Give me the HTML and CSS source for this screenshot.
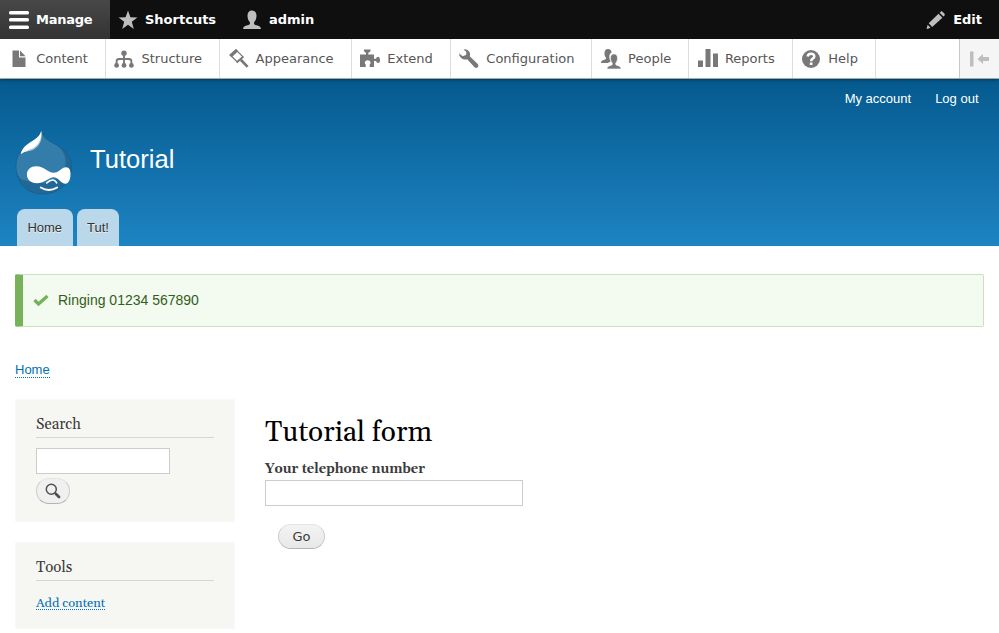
FILE: index.html
```html
<!DOCTYPE html>
<html lang="en">
<head>
<meta charset="utf-8">
<title>Tutorial form | Tutorial</title>
<link rel="stylesheet" href="styles.css">
</head>
<body>
<nav class="toolbar-bar">
  <a class="tab tab-active" href="#"><svg class="icon" viewBox="0 0 20 20"><g fill="#fff"><rect y="1" width="20" height="3.500" rx="1.500"/><rect y="8" width="20" height="3.500" rx="1.500"/><rect y="15.500" width="20" height="3.500" rx="1.500"/></g></svg>Manage</a>
  <a class="tab tab-shortcuts" href="#"><svg class="icon" viewBox="0 0 20 20"><path fill="#bebebe" d="M10 .5l2.400 6.800 7 .2-5.600 4.300 2 7.200-5.800-4.200L4.200 19l2-7.200L.6 7.500l7-.2z"/></svg>Shortcuts</a>
  <a class="tab tab-user" href="#"><svg class="icon" viewBox="0 0 20 20"><path fill="#bebebe" d="M10 .5c3 0 4.500 2 4.500 5.300 0 2.800-1 5-2.300 6.300-.5 1.800.1 2.500 2.300 3.200 2.700.7 4.300 1.200 4.500 3.700H1c.2-2.500 1.800-3 4.500-3.700 2.200-.7 2.800-1.400 2.300-3.200C6.500 10.800 5.500 8.600 5.500 5.800 5.500 2.500 7 .5 10 .5z"/></svg>admin</a>
  <a class="tab tab-edit" href="#"><svg class="icon" viewBox="0 0 20 20"><path fill="#bebebe" d="M12.500 3.800l3.900 3.900L6.200 17.100l-3.500-3.900zM13.600 2.700l1.200-1c.6-.5 1.200-.4 1.700.1l2 2c.5.600.5 1.200 0 1.700l-1.100 1.100zM1.700 14.800l2.800 3-3.200 1.200-.7-.8z"/></svg>Edit</a>
</nav>
<nav class="tray">
  <a class="item" href="#"><svg class="icon" viewBox="0 0 20 20"><path fill="#787878" d="M3.500 1.500H10v7h6.500V18h-13zM11 1.500l5.500 5.800H11z"/></svg>Content</a>
  <a class="item" href="#"><svg class="icon" viewBox="0 0 20 20"><g fill="#787878"><circle cx="10" cy="4.200" r="2.700"/><circle cx="2.600" cy="16.400" r="2.400"/><circle cx="10" cy="16.400" r="2.400"/><circle cx="17.400" cy="16.400" r="2.400"/></g><path fill="none" stroke="#787878" stroke-width="1.900" d="M10 5v11M2.600 16v-3.500q0-2.500 2.500-2.500h9.800q2.500 0 2.500 2.500V16"/></svg>Structure</a>
  <a class="item" href="#"><svg class="icon" viewBox="0 0 20 20"><path fill="none" stroke="#787878" stroke-width="1.300" d="M1.200 6L7 .9l7 7-5.800 5z"/><path fill="#787878" d="M.3 6L7 0l2.200 2.200-6.500 6zM13.600 6.900l1.200 1.400-6.500 5.900-1.300-1.500z"/><path stroke="#787878" stroke-width="2.700" d="M11.800 10.700l6.800 7.200"/></svg>Appearance</a>
  <a class="item" href="#"><svg class="icon" viewBox="0 0 20 20"><path fill="#787878" d="M0 5.500h6V3.700Q3.500 3.100 4 .5h6.500q.5 2.600-2.200 3.200v1.800H14v4.200h2q.5-2 2.300-2Q20 8 20 11t-1.700 3q-1.800 0-2.300-2h-2v6H9.700v-2.500q1.100-.8.800-2.200-.4-2-2.800-2T4.800 13.300q-.3 1.400.9 2.200V18H0z"/></svg>Extend</a>
  <a class="item" href="#"><svg class="icon" viewBox="0 0 20 20"><path fill="#787878" d="M4.500.4Q8.600-.5 10.500 3q1 2.300.2 4.200l8 7.800q1.400 1.700 0 3.200-1.600 1.400-3.200 0L8.200 10.200Q5 11.300 2.200 9 0 7 0 4.300l3.600 2.900 3.500-1.300.3-3z"/></svg>Configuration</a>
  <a class="item" href="#"><svg class="icon" viewBox="0 0 20 20"><path fill="#787878" d="M7 0c2.200 0 3.500 1.200 3.500 3.500-2 1.300-2.500 3.200-2 6 .3 1.600.8 2.300 1.200 3-.9.7-2 1-2.900 1.500H0c.1-2.500 1.200-2.400 3.500-3.200 1.500-.6 2-1.300 1.200-2.500C3.800 7.300 3.400 5.700 3.500 4 3.600 1.300 4.800 0 7 0z"/><path fill="#787878" stroke="#fff" stroke-width=".6" d="M13 4.900c2.300 0 3.600 1.500 3.500 4.300 0 2-.7 3.500-1.600 4.700-.7 1.400-.2 2 1.600 2.600 2.300.7 3.400 1.200 3.500 3.500H6c.1-2.300 1.200-2.800 3.500-3.500 1.800-.6 2.300-1.200 1.600-2.600-.9-1.200-1.600-2.700-1.600-4.700C9.400 6.400 10.700 4.900 13 4.900z"/></svg>People</a>
  <a class="item" href="#"><svg class="icon" viewBox="0 0 20 20"><path fill="#787878" d="M0 11.500h5V18H0zM7.500 0h5v18h-5zM15 4.500h5V18h-5z"/></svg>Reports</a>
  <a class="item" href="#"><svg class="icon" viewBox="0 0 20 20"><circle cx="10" cy="10" r="9" fill="#787878"/><path fill="none" stroke="#fff" stroke-width="2.500" d="M6.600 7.500Q7 4.700 10 4.700t3.300 2.600q0 1.500-1.600 2.400-1.500.8-1.500 2.500"/><path fill="#fff" d="M8.800 13.500h2.700V16H8.800z"/></svg>Help</a>
  <a class="toggle" href="#" aria-label="Vertical orientation"><svg class="icon" viewBox="0 0 20 20"><path fill="#bebebe" d="M1 2.500h3.500v15H1zM8.500 10l5.500-5v3h6v4h-6v3z"/></svg></a>
</nav>
<header class="header">
  <div class="account"><a href="#">My account</a><a href="#">Log out</a></div>
  <div class="branding">
    <svg class="logo" viewBox="0 0 58 66" preserveAspectRatio="none">
      <path fill="#226796" d="M27 1c1 6 5 9 13 13 10 5 17 12 17 23 0 15-12 27-29 27S1 52 1 36C1 24 8 18 18 12c6-4 8-7 9-11z"/>
      <path fill="#347dab" d="M27 1c1 6 5 9 13 13 7 4 11 10 11 18 0 14-12 21-26 21-7 0-13-2-19-4C2 45 1 41 1 36 1 24 8 18 18 12c6-4 8-7 9-11z"/>
      <path fill="none" stroke="#155a87" stroke-width="1" opacity=".6" d="M27 1c1 6 5 9 13 13 10 5 17 12 17 23 0 15-12 27-29 27S1 52 1 36C1 24 8 18 18 12c6-4 8-7 9-11z"/>
      <path fill="#accbdc" d="M26.500 1c1.500 8-1 15-8.500 19-5 2-9 1-12 4 0-5 8-10 13-13 4-3 6.500-6 7.500-10z"/>
      <path fill="#fff" d="M26.500 1c.5 7-2 13-8 17-4 2-8 3-12.500 6C7 17 14 13 19 10c4-3 6.500-5 7.500-9z"/>
      <path fill="#fff" d="M12 44.500c0-5 4-8.300 9.500-8.300 7.500 0 12 6.500 17.500 6.500 5.500 0 8-5.500 12.500-5.500 3.500 0 4.500 3 4.500 7 0 5-2 9.500-5 9.500-4.500 0-7.500-6.500-12-6.500-5 0-9 6-17 6-6 0-10-3.700-10-8.700z"/>
      <path fill="none" stroke="#fff" stroke-width="1.700" stroke-linecap="round" d="M32 53c2-2 4-3 6-3 2.500 0 3 1 4 2.800"/>
      <path fill="none" stroke="#fff" stroke-width="2" stroke-linecap="round" d="M26 57.500q8 5 16.500 0"/>
    </svg>
    <span class="site-name">Tutorial</span>
  </div>
  <nav class="menu"><a href="#">Home</a><a href="#">Tut!</a></nav>
</header>
<div class="message"><svg class="check" viewBox="0 0 16 16"><path fill="none" stroke="#73b355" stroke-width="3.200" d="M1.500 8l4 4 9-8"/></svg>Ringing 01234 567890</div>
<div class="breadcrumb"><a class="link" href="#">Home</a></div>
<div class="columns">
  <aside class="sidebar">
    <section class="block search">
      <h2>Search</h2>
      <input class="field" type="text" aria-label="Search">
      <button class="button search-button" aria-label="Search"><svg viewBox="0 0 16 16"><circle cx="6.300" cy="6.300" r="5" fill="none" stroke="#505050" stroke-width="1.500"/><path stroke="#505050" stroke-width="2.800" stroke-linecap="round" d="M11 11l3 3"/><path stroke="#505050" stroke-width="1.700" d="M9.700 9.700l2 2"/></svg></button>
    </section>
    <section class="block tools">
      <h2>Tools</h2>
      <a class="link" href="#">Add content</a>
    </section>
  </aside>
  <main class="main">
    <h1>Tutorial form</h1>
    <label for="phone">Your telephone number</label>
    <input class="field" id="phone" type="text">
    <button class="button go">Go</button>
  </main>
</div>
</body>
</html>
```
FILE: styles.css
```css
* { box-sizing: border-box; }
body { margin: 0; background: #fff; color: #3b3b3b; font-family: Georgia, Gelasio, "Liberation Serif", serif; height: 633px; overflow: hidden; }
a { text-decoration: none; color: inherit; }
svg { display: block; flex: none; }
.icon { width: 20px; height: 20px; }
.toolbar-bar { display: flex; height: 39px; background: #0f0f0f; color: #fff; font: bold 13px "DejaVu Sans", sans-serif; }
.tab { display: flex; align-items: center; gap: 7px; padding: 0 9px; }
.tab-active { width: 110px; background: linear-gradient(#484848, #333); letter-spacing: -.25px; }
.tab-shortcuts { width: 123px; padding-left: 8px; }
.tab-edit { margin-left: auto; padding-right: 17px; }
.tray { display: flex; height: 40px; border-bottom: 1px solid #a5a9ab; background: #fff; color: #565656; font: 13px "DejaVu Sans", sans-serif; position: relative; box-shadow: 0 0 4px rgba(0, 0, 0, .6); clip-path: inset(0 0 -6px 0); }
.item { display: flex; align-items: center; gap: 7px; padding: 0 17px 0 8.600px; border-right: 1px solid #ddd; }
.item:first-child { padding-left: 9.200px; }
.toggle { display: flex; align-items: center; margin-left: auto; width: 40px; padding-left: 9px; border-left: 1px solid #c9c9c9; background: #f5f5f5; }
.header { display: flex; flex-direction: column; height: 167px; background: linear-gradient(#055a8e, #1d84c3); color: #fff; font-family: "Liberation Sans", sans-serif; }
.account { display: flex; justify-content: flex-end; gap: 24px; padding: 12px 20.500px 0; font-size: 13px; line-height: 16px; }
.branding { display: flex; padding: 23px 15px 0; }
.logo { width: 57.500px; height: 66px; }
.site-name { margin: 14px 0 0 17.500px; font-size: 25.600px; line-height: 30px; }
.menu { display: flex; gap: 4px; margin-top: auto; padding-left: 17px; font-size: 13px; color: #333; }
.menu a { height: 37px; padding: 0 10.500px 0 10.400px; line-height: 37px; border-radius: 8px 8px 0 0; background: #bbd8ea; text-shadow: 0 1px #eee; }
.message { display: flex; align-items: center; height: 53px; margin: 28px 15px 0; padding: 0 0 2px 10px; border: 1px solid #c9e1bd; border-left: 8px solid #77b259; border-radius: 2px; background: #f3faef; color: #325e1c; font: 14px "Liberation Sans", sans-serif; }
.check { width: 16px; height: 16px; margin-right: 9px; }
.link { color: #0071b3; border-bottom: 1px dotted #0071b3; }
.breadcrumb { height: 72px; padding: 35px 15px 0; font: 13px/16px "Liberation Sans", sans-serif; }
.columns { display: flex; gap: 30px; padding: 0 15px; }
.sidebar { display: flex; flex-direction: column; gap: 20px; width: 220px; }
.block { padding: 14px 20px 0; background: #f6f6f2; border: 1px solid #f9f9f9; }
.search { height: 123px; }
.tools { height: 87px; font-size: 12.800px; line-height: 14px; }
h2 { height: 24px; margin: 0 0 10px; border-bottom: 1px solid #d6d6d6; font-size: 15px; font-weight: normal; line-height: 21px; }
.tools h2 { margin-bottom: 15px; }
.tools .link { display: inline-block; height: 14px; }
.field { display: block; height: 26px; padding: 4px; border: 1px solid #ccc; background: #fff; }
.search .field { width: 134px; }
.button { display: block; border: 1px solid #ccc; border-top-color: #e4e4e4; border-bottom-color: #b4b4b4; border-radius: 16px; background: linear-gradient(#f3f3f3, #e8e8e8); color: #3a3a3a; }
.search-button { width: 34px; height: 26px; margin-top: 4px; padding: 0 8px 1px 8px; background: #f0f0f0; }
.search-button svg { width: 16px; height: 16px; }
.main { padding-top: 14px; }
h1 { margin: 0 0 8px; color: #000; font-size: 28px; font-weight: normal; line-height: 40px; }
label { display: block; margin-bottom: 2px; font-size: 13px; font-weight: bold; line-height: 17px; }
.main .field { width: 258px; }
.go { width: 47px; height: 25px; margin: 18px 0 0 13px; padding: 0; font: 13px "DejaVu Sans", sans-serif; }
```
